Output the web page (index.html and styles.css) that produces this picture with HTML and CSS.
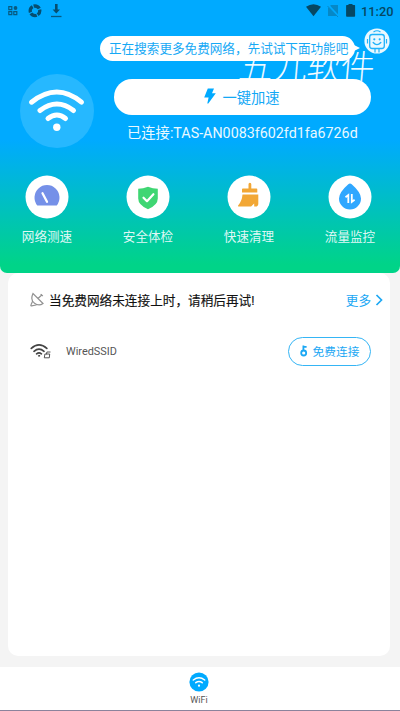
FILE: index.html
```html
<!DOCTYPE html>
<html lang="zh-CN">
<head>
<meta charset="utf-8">
<title>WiFi</title>
<link rel="stylesheet" href="styles.css">
</head>
<body>
<div class="app">
  <header class="hero">
    <div class="status">
      <svg class="s-left" width="56" height="22" viewBox="0 0 56 22" fill="none" stroke="#075a80" stroke-width="1.2">
        <path d="M.8 6.7h3v3h-3zM.8 11.600h3v3h-3zM5.800 11.600h3v3h-3z"/><circle cx="7.500" cy="8" r="1.900" fill="#075a80" stroke="none"/>
        <circle cx="27" cy="10.800" r="4.800" stroke="#064e70" stroke-width="3.300" stroke-dasharray="6.500 1.040" stroke-dashoffset="2"/>
        <path d="M43 16.500h10.500" stroke-width="1.300"/><path d="M47 4h2.600v5.500h2.400l-3.700 4-3.700-4H47z" fill="#064e70" stroke="none"/>
      </svg>
      <div class="s-right">
        <svg width="52" height="22" viewBox="0 0 52 22">
          <path d="M1 6.700Q8.500 1.700 16 6.700L8.500 16.300z" fill="#064763"/>
          <path d="M26 5h7v11h-10V8" fill="#0688c6"/><path d="M23 5l11 12" stroke="#00aaff" stroke-width="2.200"/><path d="M22.500 6l10.500 11" stroke="#0688c6" stroke-width="1"/>
          <path d="M43.500 4h4v1h2q.6 0 .6.700V16q0 .8-.8.800h-7.400q-.8 0-.8-.8V5.700q0-.7.700-.7h1.700z" fill="#064763"/>
        </svg>
        <span class="clock">11:20</span>
      </div>
    </div>
    <div class="notice">
      <div class="bubble">正在搜索更多免费网络，先试试下面功能吧</div>
      <svg class="bot" width="26" height="26" viewBox="0 0 26 26" fill="none">
        <circle cx="13" cy="13" r="12.600" fill="#e9f8ff"/>
        <path d="M9.500 4q3.500-2.500 7 0" stroke="#1fb2fb" stroke-width="1.100"/>
        <rect x="5.700" y="6.500" width="14.600" height="14" rx="2.500" fill="#e9f8ff" stroke="#1fb2fb" stroke-width="1.300"/>
        <path d="M3.500 11v4.500M22.500 11v4.500M11 20.500v4M15 20.500v4" stroke="#1fb2fb" stroke-width="1.200"/>
        <path d="M9.200 14.500q3.800 4.300 7.600 0" stroke="#1fb2fb" stroke-width="1.400" stroke-linecap="round"/>
        <circle cx="10.300" cy="11.300" r="1.100" fill="#1fb2fb"/><circle cx="15.700" cy="11.300" r="1.100" fill="#1fb2fb"/>
      </svg>
    </div>
    <div class="watermark">五九软件</div>
    <div class="main">
      <div class="wifi-disc">
        <svg width="74" height="74" viewBox="0 0 74 74" fill="none" stroke="#fff" stroke-width="5" stroke-linecap="round">
          <path d="M11.500 28.200Q37 7.800 61.500 28.200M20 36.500Q37 23.500 53.500 36.500M28 44.500Q37 37.500 45.500 44.500"/><circle cx="36.800" cy="53.300" r="3.700" fill="#fff" stroke="none"/>
        </svg>
      </div>
      <div class="main-info">
        <button class="boost">
          <svg width="12" height="16" viewBox="0 0 12 16" fill="#00aaff"><path d="M3.800.5H10L8 5.300h3.800L4.300 15.500h-1l1.300-6H.2z"/></svg>
          一键加速
        </button>
        <div class="connected">已连接:TAS-AN0083f602fd1fa6726d</div>
      </div>
    </div>
    <nav class="tools">
      <div class="tool">
        <svg width="44" height="44" viewBox="0 0 44 44"><circle cx="22" cy="22" r="21.500" fill="#fff"/><path d="M12.300 30.500A12.500 12.500 0 1 1 31.700 30.500Z" fill="#7590e8"/><path d="M17.500 18.300l4.500 8.400" stroke="#fff" stroke-width="2.300" stroke-linecap="round"/></svg>
        <span>网络测速</span>
      </div>
      <div class="tool">
        <svg width="44" height="44" viewBox="0 0 44 44" fill="none"><circle cx="22" cy="22" r="21.500" fill="#fff"/><path d="M22 11.800q4.800 2 9.800 2v9.700q0 6.500-9.800 10.800-9.800-4.300-9.800-10.800v-9.700q5 0 9.800-2z" fill="#3fd673"/><path d="M17.500 22.700l3.500 3.500 6.400-7" stroke="#fff" stroke-width="2.200" stroke-linecap="round" stroke-linejoin="round"/></svg>
        <span>安全体检</span>
      </div>
      <div class="tool">
        <svg width="44" height="44" viewBox="0 0 44 44"><circle cx="22" cy="22" r="21.500" fill="#fff"/><path d="M21.500 9.300q0-1.500 1.400-1.500t1.400 1.500v4.300h5.200q.8 0 .8.800v3H15v-3q0-.8.800-.8h5.700zM15.500 19.500h15.800v9.200q0 2.800-2.800 2.800h-1.300v-3l-3.100 3H11.800q-1.200-.2-.5-1.300 3.700-4.200 4.200-10.700z" fill="#f2a735"/></svg>
        <span>快速清理</span>
      </div>
      <div class="tool">
        <svg width="44" height="44" viewBox="0 0 44 44" fill="none"><circle cx="22" cy="22" r="21.500" fill="#fff"/><path d="M20.300 9.200q1.700-1.500 3.400 0 9.300 8.100 9.300 14.300a11 11 0 0 1-22 0q0-6.200 9.300-14.300z" fill="#2fa7ff"/><path d="M17.500 22.200l2.800-2.200v8M23.800 19v8l2.800-2.200" stroke="#fff" stroke-width="1.800"/></svg>
        <span>流量监控</span>
      </div>
    </nav>
  </header>
  <main class="card">
    <div class="card-head">
      <svg width="15" height="16" viewBox="0 0 15 16" fill="none" stroke="#929292" stroke-width="1.200" stroke-linecap="round"><path d="M3 1.500Q0 8 4.500 11.300 9 14.500 13 11.500ZM8 6.500L11.700 3M11 2.500l1.500 1.200M2.500 9.500L1 12.800q-.5 1 .7 1l4.300-.8"/></svg>
      <h1>当免费网络未连接上时，请稍后再试!</h1>
      <a class="more">更多 <svg width="8" height="12" viewBox="0 0 8 12" fill="none" stroke="#1ca8f4" stroke-width="1.700"><path d="M1.500 1l5 5-5 5"/></svg></a>
    </div>
    <div class="network">
      <svg width="22" height="17" viewBox="0 0 22 17" fill="none" stroke="#444" stroke-width="1.700" stroke-linecap="round"><path d="M1.300 5.400Q9 -1.600 16.800 5.400M4 8.300Q9 3.900 14 8.300M6.600 10.800Q9 8.900 11.400 10.800"/><circle cx="9" cy="12.800" r=".6" stroke-width="1"/><path d="M15.300 11h4.400l-.4 3.800h-4.600zM16.500 11l.4-2h3.200" stroke-width=".9"/></svg>
      <span class="ssid">WiredSSID</span>
      <button class="connect">
        <svg width="8" height="12" viewBox="0 0 8 12" fill="none" stroke="#1ca8f4" stroke-width="1.800"><circle cx="3.700" cy="8" r="2.500"/><path d="M3.400 5.500V.5M3.400 1.800h3.200"/></svg>
        <span>免费连接</span>
      </button>
    </div>
  </main>
  <footer class="tabbar">
    <svg width="20" height="20" viewBox="0 0 20 20" fill="none" stroke="#fff" stroke-width="1.500" stroke-linecap="round"><circle cx="10" cy="10" r="9.600" fill="#00aaff" stroke="none"/><path d="M4.300 8Q10 3.400 15.700 8M6.800 10.700Q10 8.100 13.200 10.700"/><circle cx="10" cy="13.700" r="1.100" fill="#fff" stroke="none"/></svg>
    <span>WiFi</span>
  </footer>
</div>
</body>
</html>
```

FILE: styles.css
```css
* { box-sizing: border-box; }
body { margin: 0; font-family: Roboto, "Noto Sans CJK SC", sans-serif; background: #f4f4f4; }
button { font-family: inherit; margin: 0; padding: 0; }
svg { display: block; flex: none; }
.app { width: 400px; height: 711px; display: flex; flex-direction: column; overflow: hidden; }
.hero { position: relative; height: 273px; flex: none; border-radius: 0 0 7px 7px; background: linear-gradient(#00aaff 0, #00aaff 140px, #00d488 265px); }
.status { height: 22px; padding: 0 6px 0 8px; display: flex; justify-content: space-between; }
.s-right { display: flex; gap: 4px; }
.clock { width: 33px; font-size: 12.8px; line-height: 23px; font-weight: 500; color: #064763; white-space: nowrap; }
.notice { height: 57px; padding: 6px 10px 0 100px; display: flex; justify-content: space-between; }
.bubble { position: relative; width: 255px; height: 25px; margin-top: 8px; padding-left: 9px; border-radius: 13px; background: #fff; color: #16a9f5; font-size: 12.6px; line-height: 25px; white-space: nowrap; }
.bubble::after { content: ""; position: absolute; right: -5px; top: 7px; border-left: 10px solid #fff; border-top: 5px solid transparent; border-bottom: 5px solid transparent; }
.watermark { position: absolute; left: 239px; top: 44px; color: #fff; font-size: 34px; line-height: 42px; font-weight: 100; font-family: "Noto Sans CJK SC", sans-serif; white-space: nowrap; transform: skewX(-5deg); -webkit-text-stroke: .4px #fff; }
.main { height: 97px; padding-left: 20px; display: flex; gap: 20px; position: relative; }
.wifi-disc { width: 74px; height: 74px; margin-top: -5px; border-radius: 50%; background: #26b8ff; }
.main-info { width: 257px; }
.boost { width: 257px; height: 36px; border: 0; border-radius: 18px; background: #fff; color: #13a8f5; font-size: 14.3px; display: flex; justify-content: center; align-items: center; gap: 6px; padding: 0 1px 2px 0; }
.connected { margin: 8px 0 0 13px; line-height: 20px; font-size: 14.3px; color: #e9f8ff; white-space: nowrap; }
.tools { display: flex; justify-content: space-between; padding: 0 24px 0 21px; margin-top: -1px; }
.tool { width: 52px; display: flex; flex-direction: column; align-items: center; gap: 8px; color: #dff8f5; font-size: 12.6px; line-height: 20px; white-space: nowrap; }
.card { width: 382px; height: 383px; margin-left: 8px; flex: none; background: #fff; border-radius: 10px; }
.card-head { height: 54px; padding: 0 7px 0 22px; display: flex; align-items: center; }
h1 { margin: 0 auto 2px 4px; font-size: 12.65px; font-weight: 400; color: #111; white-space: nowrap; -webkit-text-stroke: .15px #111; }
.more { display: flex; align-items: center; gap: 4px; color: #1ca8f4; font-size: 12.6px; margin-bottom: 1px; }
.network { height: 48px; padding: 0 19px 0 22px; display: flex; align-items: center; }
.ssid { margin-left: 14px; margin-right: auto; font-size: 10.9px; color: #555; }
.connect { width: 83px; height: 29px; border: 1px solid #35b5f5; border-radius: 15px; background: #fff; color: #1ca8f4; font-size: 11.7px; display: flex; align-items: center; justify-content: center; gap: 5px; }
.connect span { padding-bottom: 2px; }
.tabbar { height: 44px; margin-top: 11px; padding-top: 5px; background: #fff; border-bottom: 1px solid #8b839c; display: flex; flex-direction: column; align-items: center; color: #555; font-size: 9px; line-height: 16px; padding-right: 2px; }
```
